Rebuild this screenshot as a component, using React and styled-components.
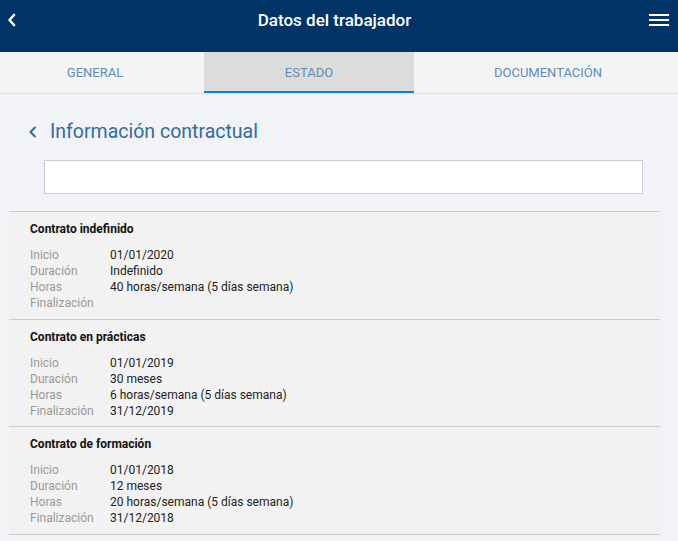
import React from "react"
import styled, { createGlobalStyle } from "styled-components"

const GlobalStyle = createGlobalStyle`
    body {
        margin: 0;
        background: #f2f3f7;
        font-family: Roboto, "Liberation Sans", Arial, sans-serif;
    }
`

const contracts = [
    {
        title: "Contrato indefinido",
        rows: [
            ["Inicio", "01/01/2020"],
            ["Duración", "Indefinido"],
            ["Horas", "40 horas/semana (5 días semana)"],
            ["Finalización", ""]
        ]
    },
    {
        title: "Contrato en prácticas",
        rows: [
            ["Inicio", "01/01/2019"],
            ["Duración", "30 meses"],
            ["Horas", "6 horas/semana (5 días semana)"],
            ["Finalización", "31/12/2019"]
        ]
    },
    {
        title: "Contrato de formación",
        rows: [
            ["Inicio", "01/01/2018"],
            ["Duración", "12 meses"],
            ["Horas", "20 horas/semana (5 días semana)"],
            ["Finalización", "31/12/2018"]
        ]
    }
]

const tabs = ["General", "Estado", "Documentación"]

const App = () => (
    <Page>
        <GlobalStyle />
        <Header>
            <IconButton aria-label="Volver">
                <svg width="10" height="14" viewBox="0 0 10 14">
                    <polyline points="7,2 2.5,7 7,12" fill="none" stroke="#fff" strokeWidth="2.6" strokeLinecap="round" strokeLinejoin="round" />
                </svg>
            </IconButton>
            <HeaderTitle>Datos del trabajador</HeaderTitle>
            <IconButton aria-label="Menú">
                <svg width="22" height="14" viewBox="0 0 22 14">
                    <rect x="1" y="1" width="20" height="2" fill="#fff" />
                    <rect x="1" y="6" width="20" height="2" fill="#fff" />
                    <rect x="1" y="11" width="20" height="2" fill="#fff" />
                </svg>
            </IconButton>
        </Header>
        <Tabs>
            {tabs.map(tab => (
                <Tab key={tab} active={tab === "Estado"}>{tab}</Tab>
            ))}
        </Tabs>
        <Section>
            <SectionHeader>
                <svg width="10" height="14" viewBox="0 0 10 14">
                    <polyline points="7,2.5 2.5,7 7,11.5" fill="none" stroke="#2f6ba6" strokeWidth="2" strokeLinecap="round" strokeLinejoin="round" />
                </svg>
                <SectionTitle>Información contractual</SectionTitle>
            </SectionHeader>
            <SearchInput type="text" />
            <CardList>
                {contracts.map(contract => (
                    <Card key={contract.title}>
                        <CardTitle>{contract.title}</CardTitle>
                        <Rows>
                            {contract.rows.map(([label, value]) => (
                                <React.Fragment key={label}>
                                    <Label>{label}</Label>
                                    <Value>{value}</Value>
                                </React.Fragment>
                            ))}
                        </Rows>
                    </Card>
                ))}
            </CardList>
        </Section>
    </Page>
)

const Page = styled.div`
    min-height: 541px;
`
const Header = styled.header`
    height: 52px;
    background: #003366;
    display: flex;
    align-items: center;
    justify-content: space-between;
    padding: 0 8px 12px 7px;
    box-sizing: border-box;
`
const IconButton = styled.span`
    display: flex;
    align-items: center;
    cursor: pointer;
`
const HeaderTitle = styled.h1`
    margin: 0;
    color: #fff;
    font-size: 17px;
    font-weight: 500;
    padding-left: 4px;
`
const Tabs = styled.nav`
    display: grid;
    grid-template-columns: 204px 210px 1fr;
    height: 42px;
    background: #f4f4f4;
    border-bottom: 1px solid #dedee3;
    box-sizing: border-box;
`
const Tab = styled.div`
    display: flex;
    align-items: center;
    justify-content: center;
    text-transform: uppercase;
    font-size: 13px;
    color: #5a8cbf;
    background: ${({ active }) => active ? "#dcdcdc" : "transparent"};
    border-bottom: 2px solid ${({ active }) => active ? "#0a82df" : "transparent"};
    padding-top: 2px;
    cursor: pointer;

    &:first-child {
        padding-right: 14px;
    }

    &:last-child {
        padding-left: 4px;
    }
`
const Section = styled.section`
    display: flex;
    flex-direction: column;
`
const SectionHeader = styled.div`
    display: flex;
    align-items: center;
    gap: 12px;
    padding: 26px 0 0 28px;
    height: 24px;
`
const SectionTitle = styled.h2`
    margin: 0;
    font-size: 19.5px;
    font-weight: 400;
    color: #2f6ba6;
    line-height: 24px;
`
const SearchInput = styled.input`
    margin: 16px 35px 0 44px;
    height: 34px;
    border: 1px solid #cccccc;
    background: #fff;
    box-sizing: border-box;
    outline: none;
`
const CardList = styled.div`
    margin: 17px 18px 0 9px;
    border-top: 1px solid #cdcdcd;
`
const Card = styled.div`
    background: #f2f2f2;
    border-bottom: 1px solid #cdcdcd;
    padding: 9px 0 7.6px 21px;
`
const CardTitle = styled.div`
    font-size: 12px;
    font-weight: 700;
    color: #111;
    line-height: 16px;
`
const Rows = styled.div`
    display: grid;
    grid-template-columns: 80px 1fr;
    margin-top: 10px;
    font-size: 12px;
    line-height: 16px;
`
const Label = styled.span`
    color: #999;
`
const Value = styled.span`
    color: #222;
`

export default App
